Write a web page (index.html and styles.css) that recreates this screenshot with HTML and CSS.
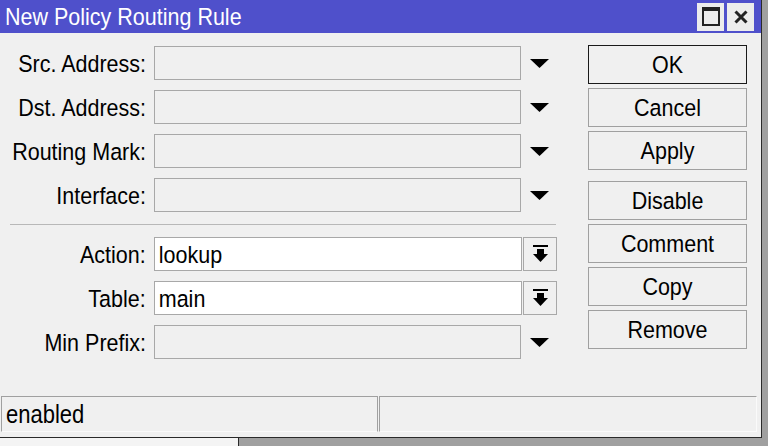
FILE: index.html
```html
<!DOCTYPE html>
<html>
  <head>
    <title>New Policy Routing Rule</title>
    <link rel="stylesheet" href="styles.css">
  </head>
  <body>
    <div class="desktop">
      <div class="window">
        <div class="titlebar">
          <span class="title">New Policy Routing Rule</span>
          <div class="title-buttons">
            <div class="tbtn">
              <svg width="18" height="19" viewBox="0 0 18 19"><rect x="1" y="1.5" width="16" height="16.5" fill="none" stroke="#222" stroke-width="2"/><rect x="0" y="0" width="18" height="4" fill="#222"/></svg>
            </div>
            <div class="tbtn">
              <svg width="14" height="14" viewBox="0 0 14 14"><path d="M1.5 1.5 L12.5 12.5 M12.5 1.5 L1.5 12.5" stroke="#222" stroke-width="3"/></svg>
            </div>
          </div>
        </div>

        <div class="content">
          <div class="form">
            <div class="row">
              <label>Src. Address:</label>
              <div class="field"></div>
              <div class="trigger"><svg width="19" height="9" viewBox="0 0 19 9"><polygon points="0,0 19,0 9.5,9" fill="#000"/></svg></div>
            </div>
            <div class="row">
              <label>Dst. Address:</label>
              <div class="field"></div>
              <div class="trigger"><svg width="19" height="9" viewBox="0 0 19 9"><polygon points="0,0 19,0 9.5,9" fill="#000"/></svg></div>
            </div>
            <div class="row">
              <label>Routing Mark:</label>
              <div class="field"></div>
              <div class="trigger"><svg width="19" height="9" viewBox="0 0 19 9"><polygon points="0,0 19,0 9.5,9" fill="#000"/></svg></div>
            </div>
            <div class="row">
              <label>Interface:</label>
              <div class="field"></div>
              <div class="trigger"><svg width="19" height="9" viewBox="0 0 19 9"><polygon points="0,0 19,0 9.5,9" fill="#000"/></svg></div>
            </div>

            <div class="separator"></div>

            <div class="row">
              <label>Action:</label>
              <div class="field white"><span class="txt">lookup</span></div>
              <div class="select-btn"><svg width="15" height="18" viewBox="0 0 15 18"><rect x="0" y="0" width="15" height="2" fill="#000"/><rect x="4" y="4" width="7" height="6" fill="#000"/><polygon points="0,9 15,9 7.5,17" fill="#000"/></svg></div>
            </div>
            <div class="row">
              <label>Table:</label>
              <div class="field white"><span class="txt">main</span></div>
              <div class="select-btn"><svg width="15" height="18" viewBox="0 0 15 18"><rect x="0" y="0" width="15" height="2" fill="#000"/><rect x="4" y="4" width="7" height="6" fill="#000"/><polygon points="0,9 15,9 7.5,17" fill="#000"/></svg></div>
            </div>
            <div class="row">
              <label>Min Prefix:</label>
              <div class="field"></div>
              <div class="trigger"><svg width="19" height="9" viewBox="0 0 19 9"><polygon points="0,0 19,0 9.5,9" fill="#000"/></svg></div>
            </div>
          </div>

          <div class="buttons">
            <button class="default"><span class="txt">OK</span></button>
            <button><span class="txt">Cancel</span></button>
            <button><span class="txt">Apply</span></button>
            <button class="group-start"><span class="txt">Disable</span></button>
            <button><span class="txt">Comment</span></button>
            <button><span class="txt">Copy</span></button>
            <button><span class="txt">Remove</span></button>
          </div>
        </div>

        <div class="statusbar">
          <div class="status-cell first"><span class="txt">enabled</span></div>
          <div class="status-cell"></div>
        </div>
      </div>
      <div class="bottom-strip">
        <div class="behind"></div>
      </div>
    </div>
  </body>
</html>
```

FILE: styles.css
```css
body {
  margin: 0;
  font-family: "Liberation Sans", Arial, sans-serif;
}

.desktop {
  width: 768px;
  height: 446px;
  background-color: #a0a0a0;
  overflow: hidden;
}

.window {
  width: 761px;
  height: 437px;
  background-color: #f0f0f0;
  border-right: 1px solid #2a2a2a;
  border-bottom: 1px solid #2a2a2a;
  display: flex;
  flex-direction: column;
}

/* winbox text is a little taller than plain arial */
.txt {
  display: inline-block;
  transform: translateY(1px) scaleY(1.14);
}

.titlebar {
  height: 33px;
  background-color: #4f50cb;
  display: flex;
  align-items: center;
  justify-content: space-between;
  padding-left: 5px;
}

.title {
  color: #fff;
  font-size: 21.5px;
  display: inline-block;
  transform: translateY(1px) scaleY(1.14);
}

.title-buttons {
  display: flex;
  gap: 3px;
  margin-right: 7px;
}

.tbtn {
  width: 27px;
  height: 28px;
  background-color: #ececec;
  display: flex;
  align-items: center;
  justify-content: center;
}

.content {
  flex: 1;
  display: flex;
  padding-top: 13px;
}

.form {
  width: 557px;
  display: flex;
  flex-direction: column;
  gap: 10px;
}

.row {
  display: flex;
  align-items: center;
  height: 34px;
}

.row label {
  width: 146px;
  margin-right: 8px;
  text-align: right;
  font-size: 21.5px;
  color: #000;
  transform: translateY(1px) scaleY(1.14);
}

.field {
  width: 367px;
  height: 34px;
  box-sizing: border-box;
  border: 1px solid #a8a8a8;
  background-color: #f0f0f0;
  font-size: 21.5px;
  line-height: 32px;
  padding-left: 4px;
}

.field.white {
  width: 369px;
  background-color: #fff;
}

.trigger {
  width: 36px;
  display: flex;
  justify-content: center;
}

.select-btn {
  width: 34px;
  height: 34px;
  margin-left: 1px;
  box-sizing: border-box;
  border: 1px solid #a8a8a8;
  background-color: #f0f0f0;
  display: flex;
  align-items: center;
  justify-content: center;
}

.separator {
  margin: 2px 1px 2px 10px;
  border-top: 1px solid #b8b8b8;
}

.buttons {
  margin-left: 31px;
  margin-top: -1px;
  width: 159px;
  display: flex;
  flex-direction: column;
  gap: 4px;
}

.buttons button {
  height: 39px;
  box-sizing: border-box;
  border: 1px solid #a0a0a0;
  background-color: #f0f0f0;
  font-family: "Liberation Sans", Arial, sans-serif;
  font-size: 21.5px;
  color: #000;
  padding: 0;
}

.buttons button.default {
  border-color: #1a1a1a;
}

.buttons button.group-start {
  margin-top: 7px;
}

.statusbar {
  display: flex;
  height: 36px;
  margin: 0 4px 5px 1px;
  gap: 1px;
}

.status-cell {
  box-sizing: border-box;
  border-top: 1px solid #a0a0a0;
  border-left: 1px solid #a0a0a0;
  border-right: 1px solid #fafafa;
  border-bottom: 1px solid #fafafa;
  font-size: 22px;
  line-height: 34px;
  padding-left: 4px;
  flex: 1;
}

.status-cell.first {
  flex: 0 0 377px;
  border-right-color: #a0a0a0;
}

.bottom-strip {
  height: 8px;
}

.behind {
  width: 238px;
  height: 8px;
  background-color: #f4f4f4;
  border-right: 1px solid #2a2a2a;
}
```
